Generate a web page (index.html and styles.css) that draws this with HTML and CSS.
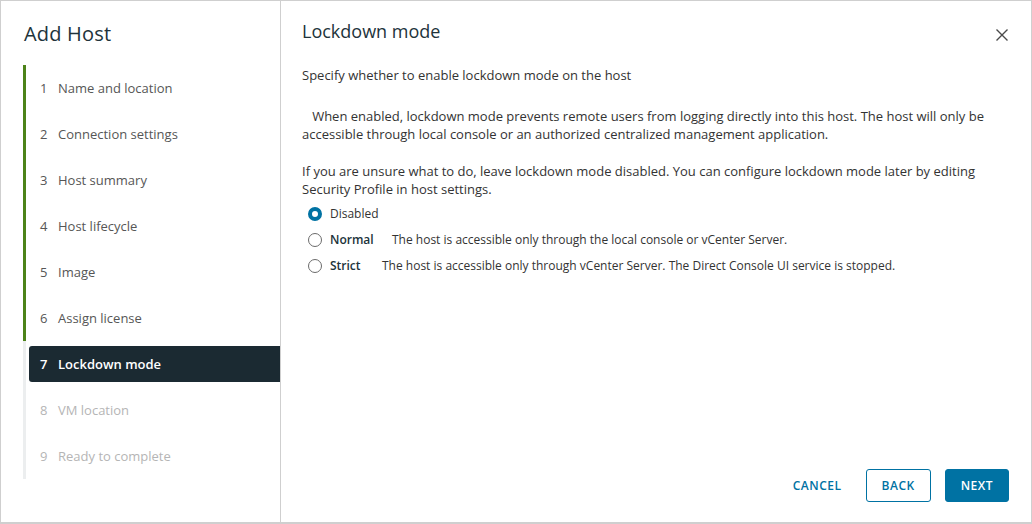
FILE: index.html
```html
<!DOCTYPE html>
<html lang="en">
<head>
    <meta charset="UTF-8">
    <meta name="viewport" content="width=device-width, initial-scale=1.0">
    <title>Add Host</title>
    <link rel="stylesheet" href="styles.css">
</head>
<body>
    <div class="wizard">
        <aside class="sidebar">
            <h1 class="wizard-title">Add Host</h1>
            <ol class="steps">
                <li class="step done"><div class="step-inner"><span class="num">1</span>Name and location</div></li>
                <li class="step done"><div class="step-inner"><span class="num">2</span>Connection settings</div></li>
                <li class="step done"><div class="step-inner"><span class="num">3</span>Host summary</div></li>
                <li class="step done"><div class="step-inner"><span class="num">4</span>Host lifecycle</div></li>
                <li class="step done"><div class="step-inner"><span class="num">5</span>Image</div></li>
                <li class="step done"><div class="step-inner"><span class="num">6</span>Assign license</div></li>
                <li class="step current"><div class="step-inner"><span class="num">7</span>Lockdown mode</div></li>
                <li class="step todo"><div class="step-inner"><span class="num">8</span>VM location</div></li>
                <li class="step todo"><div class="step-inner"><span class="num">9</span>Ready to complete</div></li>
            </ol>
        </aside>

        <main class="page">
            <header class="page-header">
                <h2 class="page-title">Lockdown mode</h2>
                <button class="close" aria-label="Close">
                    <svg width="14" height="14" viewBox="0 0 14 14"><path d="M1.5 1.5 L12.5 12.5 M12.5 1.5 L1.5 12.5" stroke="#4a4a4a" stroke-width="1.4" fill="none"/></svg>
                </button>
            </header>

            <div class="page-body">
                <p class="lead">Specify whether to enable lockdown mode on the host</p>
                <p class="info">&nbsp;&nbsp;&nbsp;When enabled, lockdown mode prevents remote users from logging directly into this host. The host will only be accessible through local console or an authorized centralized management application.</p>
                <p class="info">If you are unsure what to do, leave lockdown mode disabled. You can configure lockdown mode later by editing Security Profile in host settings.</p>

                <div class="options">
                    <label class="option">
                        <span class="radio checked"></span>
                        <span class="opt-name">Disabled</span>
                    </label>
                    <label class="option">
                        <span class="radio"></span>
                        <span class="opt-name bold normal-w">Normal</span>
                        <span class="opt-desc">The host is accessible only through the local console or vCenter Server.</span>
                    </label>
                    <label class="option">
                        <span class="radio"></span>
                        <span class="opt-name bold strict-w">Strict</span>
                        <span class="opt-desc">The host is accessible only through vCenter Server. The Direct Console UI service is stopped.</span>
                    </label>
                </div>
            </div>

            <footer class="page-footer">
                <button class="btn btn-link">CANCEL</button>
                <button class="btn btn-outline">BACK</button>
                <button class="btn btn-primary">NEXT</button>
            </footer>
        </main>
    </div>
</body>
</html>
```

FILE: styles.css
```css
* {
    box-sizing: border-box;
}

body {
    margin: 0;
    font-family: 'Open Sans', sans-serif;
    color: #333;
    background: #fff;
}

.wizard {
    display: flex;
    width: 1032px;
    height: 524px;
    border: 1px solid #cfcfcf;
    border-bottom-width: 2px;
}

/* left step list */
.sidebar {
    width: 280px;
    border-right: 1px solid #cfcfcf;
    flex-shrink: 0;
}

.wizard-title {
    margin: 0;
    padding: 19px 0 0 23px;
    height: 64px;
    font-size: 20px;
    font-weight: 400;
    color: #21333b;
    letter-spacing: 0.2px;
}

.steps {
    list-style: none;
    margin: 0 0 0 22px;
    padding: 0;
}

.step {
    height: 46px;
    border-left: 3px solid #eceeef;
    padding: 5px 0 5px 3px;
}

.step.done {
    border-left-color: #4d8319;
}

.step-inner {
    display: flex;
    align-items: center;
    height: 36px;
    padding-left: 11px;
    font-size: 13px;
    color: #565656;
    border-radius: 3px 0 0 3px;
}

.num {
    width: 18px;
}

.step.current .step-inner {
    background: #1b2a32;
    color: #fff;
    font-weight: 600;
}

.step.todo .step-inner {
    color: #b5b5b5;
}

/* right page */
.page {
    flex: 1;
    display: flex;
    flex-direction: column;
    padding: 0 22px 0 21px;
}

.page-header {
    display: flex;
    justify-content: space-between;
    align-items: flex-start;
    padding-top: 18px;
}

.page-title {
    margin: 0;
    font-size: 18px;
    font-weight: 400;
    color: #21333b;
}

.close {
    border: none;
    background: none;
    padding: 0;
    margin: 9px 0 0 0;
    width: 14px;
    height: 14px;
    cursor: pointer;
}

.page-body {
    flex: 1;
    font-size: 13px;
    line-height: 18px;
}

.lead {
    margin: 23px 0 0;
}

.info {
    margin: 23px 0 0;
    width: 690px;
}

.info + .info {
    margin-top: 19px;
}

.options {
    margin-top: 3px;
}

.option {
    display: flex;
    align-items: center;
    height: 26px;
    padding-left: 6px;
}

.radio {
    width: 14px;
    height: 14px;
    border: 1px solid #6b6b6b;
    border-radius: 50%;
    margin-right: 8px;
    flex-shrink: 0;
    background: #fff;
}

.radio.checked {
    border: 4px solid #0072a3;
    background: #fff;
}

.opt-name {
    font-size: 12px;
}

.bold {
    font-weight: 600;
    color: #21333b;
}

.normal-w {
    width: 62px;
}

.strict-w {
    width: 52px;
}

.opt-desc {
    font-size: 12px;
}

.page-footer {
    display: flex;
    justify-content: flex-end;
    align-items: center;
    gap: 14px;
    padding-bottom: 20px;
}

.btn {
    height: 33px;
    font-family: inherit;
    font-size: 12px;
    font-weight: 600;
    letter-spacing: 0.5px;
    border-radius: 3px;
    padding: 0 15px;
    cursor: pointer;
}

.btn-link {
    border: 1px solid transparent;
    background: none;
    color: #0072a3;
    padding: 0 9px;
}

.btn-outline {
    border: 1px solid #0072a3;
    background: #fff;
    color: #0072a3;
}

.btn-primary {
    border: 1px solid #0072a3;
    background: #0072a3;
    color: #fff;
}
```
